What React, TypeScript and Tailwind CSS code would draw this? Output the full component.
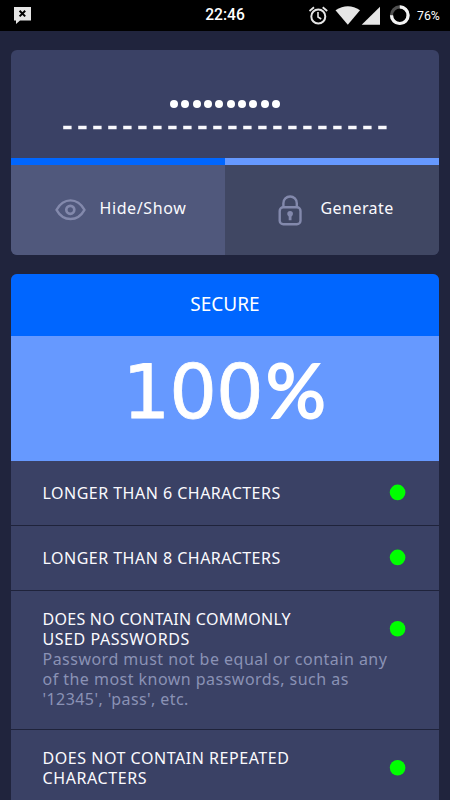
import React from "react";

function StatusBar() {
  return (
    <header className="flex h-[31px] shrink-0 items-center bg-black font-['Roboto',sans-serif] text-white">
      <div className="flex w-[150px] items-center pl-[14px]">
        <svg width="17" height="17" viewBox="0 0 17 17">
          <path d="M0 0H17V13.5H6L2 17V13.5H0Z" fill="#e6e6e6" />
          <path d="M5.6 3.8L11.2 9.4M11.2 3.8L5.6 9.4" stroke="#000" strokeWidth="2" />
        </svg>
      </div>
      <div className="w-[150px] pt-px text-center text-[15.6px] font-medium leading-none">22:46</div>
      <div className="flex w-[150px] items-center">
        <svg className="ml-[9px] shrink-0" width="102" height="22" viewBox="309 5 102 22">
          <circle cx="318.3" cy="16.5" r="7" fill="none" stroke="#e6e6e6" strokeWidth="2" />
          <path d="M318 12V17L321.2 19" fill="none" stroke="#e6e6e6" strokeWidth="1.6" />
          <path d="M309.5 11L314 7.2M322.7 7.2L327.2 11" stroke="#e6e6e6" strokeWidth="1.8" />
          <path d="M335.5 10.2Q348 2.5 360 10.2L347.8 24.8Z" fill="#e6e6e6" />
          <path d="M361.7 24.8L380 6.8V24.8Z" fill="#e6e6e6" />
          <circle cx="399.8" cy="15.2" r="8.3" fill="none" stroke="#505050" strokeWidth="3.2" />
          <path d="M399.8 6.9A8.3 8.3 0 1 1 391.5 15.2" fill="none" stroke="#f4f4f4" strokeWidth="3.2" />
        </svg>
        <span className="ml-[6px] pt-[2px] text-[12.3px] leading-none">76%</span>
      </div>
    </header>
  );
}

function EyeIcon() {
  return (
    <svg className="shrink-0" width="31" height="22" viewBox="0 0 31 22" fill="none" stroke="#8389ac" strokeWidth="2.4">
      <path d="M1.5 10.8C5 4.7 9.7 1.4 15.5 1.4S26 4.7 29.5 10.8C26 17 21.3 20 15.5 20S5 17 1.5 10.8Z" strokeLinejoin="round" />
      <circle cx="15.3" cy="10.8" r="4" strokeWidth="2.7" />
    </svg>
  );
}

function LockIcon() {
  return (
    <svg className="shrink-0" width="24" height="31" viewBox="0 0 24 31" fill="none" stroke="#8389ac" strokeWidth="2.4">
      <rect x="1.7" y="12.3" width="20.8" height="17" rx="3.6" />
      <path d="M5.4 12V8.2A6.7 6.7 0 0 1 18.8 8.2V12" />
      <circle cx="12.1" cy="18.8" r="2.8" fill="#8389ac" stroke="none" />
      <path d="M12.1 18.8V25.2" strokeWidth="2.8" />
    </svg>
  );
}

function PasswordCard() {
  return (
    <section className="h-[205px] overflow-hidden rounded-[6px] bg-[#3a4165]">
      <div className="flex h-[108px] flex-col items-center pt-[50px]">
        <div className="flex gap-[3.4px]">
          {Array.from({ length: 10 }, (_, i) => (
            <span key={i} className="size-2 rounded-full bg-white" />
          ))}
        </div>
        <svg className="mt-[17px]" width="324" height="5" viewBox="0 0 324 5">
          <path d="M0.2 2.5H324" stroke="#f8f8fc" strokeWidth="3.6" strokeDasharray="8.4 6.6" />
        </svg>
      </div>
      <div className="grid h-[97px] grid-cols-2 text-[16px] text-[#fafafe]">
        <button className="flex items-center border-t-[7px] border-[#0066ff] bg-[#50587c] pl-[43.5px] tracking-[0.6px]">
          <EyeIcon />
          <span className="ml-[14px] pb-[4px]">Hide/Show</span>
        </button>
        <button className="flex items-center border-t-[7px] border-[#6699ff] bg-[#404763] pl-[52.5px] tracking-[0.45px]">
          <LockIcon />
          <span className="ml-[19px] pb-[4px]">Generate</span>
        </button>
      </div>
    </section>
  );
}

type Line = { text: string; tracking: string };
type Rule = { lines: Line[]; note?: Line[] };

const rules: Rule[] = [
  { lines: [{ text: "LONGER THAN 6 CHARACTERS", tracking: "tracking-[0.48px]" }] },
  { lines: [{ text: "LONGER THAN 8 CHARACTERS", tracking: "tracking-[0.48px]" }] },
  {
    lines: [
      { text: "DOES NO CONTAIN COMMONLY", tracking: "tracking-[0.27px]" },
      { text: "USED PASSWORDS", tracking: "tracking-[0.55px]" },
    ],
    note: [
      { text: "Password must not be equal or contain any", tracking: "tracking-[0.48px]" },
      { text: "of the most known passwords, such as", tracking: "tracking-[0.47px]" },
      { text: "'12345', 'pass', etc.", tracking: "tracking-[0.42px]" },
    ],
  },
  {
    lines: [
      { text: "DOES NOT CONTAIN REPEATED", tracking: "tracking-[0.54px]" },
      { text: "CHARACTERS", tracking: "tracking-[0.6px]" },
    ],
  },
];

function RuleRow({ rule }: { rule: Rule }) {
  const single = rule.lines.length === 1;
  return (
    <li className={`flex items-start justify-between border-b border-[#1f233b] pl-[31.5px] pr-[33px] ${single ? "h-[65px] pt-[22px]" : "h-[139px] pt-[18px]"}`}>
      <div className="w-[346px] shrink-0 whitespace-nowrap text-[16px] leading-5">
        {rule.lines.map((line) => (
          <p key={line.text} className={`text-[#fafafe] ${line.tracking}`}>{line.text}</p>
        ))}
        {rule.note?.map((line) => (
          <p key={line.text} className={`text-[#8a92b5] ${line.tracking}`}>{line.text}</p>
        ))}
      </div>
      <svg className={`shrink-0 ${single ? "mt-[1px]" : "mt-[11px]"}`} width="17" height="17" viewBox="0 0 17 17">
        <circle cx="8.6" cy={single ? 8.4 : 8.7} r="7.8" fill="#00ff00" />
      </svg>
    </li>
  );
}

export default function App() {
  return (
    <div className="flex h-[800px] w-[450px] flex-col overflow-hidden bg-[#20243d] font-['Noto_Sans',sans-serif] text-white">
      <StatusBar />
      <main className="flex flex-col gap-[19px] px-[11px] pt-[19px]">
        <PasswordCard />
        <section className="overflow-hidden rounded-t-[6px] bg-[#3a4165]">
          <h1 className="flex h-[62px] items-center justify-center bg-[#0066ff] pb-px text-[19px]">SECURE</h1>
          <div className="flex h-[125px] items-start bg-[#6699ff] pl-[111.5px] pt-[19px] font-['DejaVu_Sans',sans-serif] text-[75px] leading-[75px] tracking-[-1px] [-webkit-text-stroke:0.8px_white]">
            <p>100<span className="ml-[3px] font-['Lato',sans-serif] leading-[0] [-webkit-text-stroke:2px_white]">%</span></p>
          </div>
          <ul>
            {rules.map((rule) => (
              <RuleRow key={rule.lines[0].text} rule={rule} />
            ))}
          </ul>
        </section>
      </main>
    </div>
  );
}
